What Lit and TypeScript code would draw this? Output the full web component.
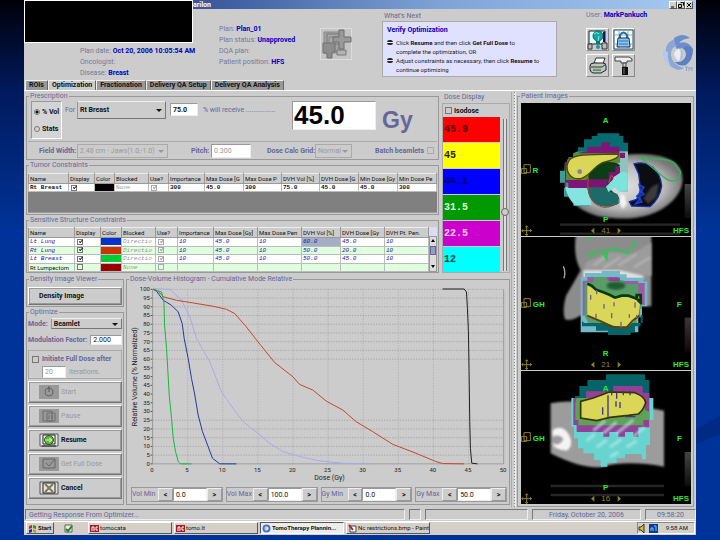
import { LitElement, html, svg, css, nothing } from "lit";
import { customElement } from "lit/decorators.js";

type Cell = string | boolean | { color: string };
interface Column { label: string; width: number }

const tumorColumns: Column[] = [
  { label: "Name", width: 40 }, { label: "Display", width: 26 }, { label: "Color", width: 20 },
  { label: "Blocked", width: 34 }, { label: "Use?", width: 20 }, { label: "Importance", width: 36 },
  { label: "Max Dose [G", width: 39 }, { label: "Max Dose P", width: 38 }, { label: "DVH Vol [%]", width: 38 },
  { label: "DVH Dose [G", width: 39 }, { label: "Min Dose [Gy", width: 39 }, { label: "Min Dose Pe", width: 39 },
];
const tumorRows: Cell[][] = [
  ["Rt Breast", true, { color: "#000" }, "None", true, "300", "45.0", "300", "75.0", "45.0", "45.0", "300"],
];
const organColumns: Column[] = [
  { label: "Name", width: 46 }, { label: "Display", width: 26 }, { label: "Color", width: 21 },
  { label: "Blocked", width: 34 }, { label: "Use?", width: 22 }, { label: "Importance", width: 36 },
  { label: "Max Dose [Gy]", width: 44 }, { label: "Max Dose Pen", width: 44 }, { label: "DVH Vol [%]", width: 39 },
  { label: "DVH Dose [Gy", width: 44 }, { label: "DVH Pt. Pen.", width: 44 },
];
const organRows: Cell[][] = [
  ["Lt Lung", true, { color: "#0033cc" }, "Directio", true, "10", "45.0", "10", "60.0", "45.0", "10"],
  ["Rt Lung", true, { color: "#cc3300" }, "Directio", true, "10", "45.0", "10", "50.0", "20.0", "10"],
  ["Lt Breast", true, { color: "#00cc33" }, "Directio", true, "10", "45.0", "10", "50.0", "45.0", "10"],
  ["Rt Lumpectom", false, { color: "#990000" }, "None", false, "", "", "", "", "", ""],
];
const doses = [
  { value: "45.9", bg: "#ff0000", fg: "#5a0000" },
  { value: "45", bg: "#ffff00", fg: "#222200" },
  { value: "44.1", bg: "#0000ff", fg: "#000066" },
  { value: "31.5", bg: "#009900", fg: "#ddffdd" },
  { value: "22.5", bg: "#cc00cc", fg: "#ffccff" },
  { value: "12", bg: "#00ffff", fg: "#004444" },
];
const curves = [
  { color: "#a9a9ee", points: "400,50 450,52 485,85 510,135 530,200 570,270 605,360 640,410 670,450 715,485 750,515 790,540 840,555 900,568 970,575 1050,577" },
  { color: "#c8452a", points: "400,52 412,56 432,75 470,85 520,93 580,103 620,112 645,125 680,165 715,210 765,272 820,315 840,338 880,355 920,388 970,415 1010,450 1060,480 1120,518 1190,545 1250,570 1270,576 1335,577" },
  { color: "#2038a8", points: "400,52 410,58 430,85 455,100 475,120 487,155 493,200 505,260 515,320 525,370 535,430 548,480 565,525 578,560 600,577 650,577" },
  { color: "#14b83c", points: "400,52 425,60 432,90 434,160 440,230 444,300 448,370 455,440 460,500 467,540 475,570 482,577 515,577" },
  { color: "#222222", points: "1270,51 1335,51 1342,60 1345,110 1348,180 1350,300 1352,450 1354,530 1358,575 1375,577" },
];

@customElement("app-root")
export class AppRoot extends LitElement {
  static styles = css`
    :host { display: block; font-family: Roboto, "Liberation Sans", sans-serif; font-size: 7px; line-height: 8px; color: #111;
      background: linear-gradient(#000008 0, #001a5c 90px, #003399 230px, #003399 100%); }
    *, *::before, *::after { box-sizing: border-box; }
    .slide { position: relative; padding: 0 24px 2px; min-height: 100vh; overflow: hidden; }
    .swoosh { position: absolute; right: 0; bottom: 96px; width: 24px; height: 28px; background: #002b85;
      clip-path: polygon(0 46%, 100% 0, 100% 66%, 0 100%); }
    .window { position: relative; background: #ccc; }
    .redacted { position: absolute; left: 0; top: 0; width: 169px; height: 43px; background: #000; border: 1px solid #fff; }
    button, input, select { font: inherit; color: inherit; margin: 0; padding: 0; border-radius: 0; min-width: 0; }
    input[type="text"] { border: 1px solid #999; border-right-color: #eee; border-bottom-color: #eee; background: #fff; padding: 0 2px; width: 100%; height: 100%; }
    input:disabled, button:disabled, select:disabled { opacity: 1; color: #999; }
    .check { appearance: none; display: block; flex: none; width: 7px; height: 7px; border: 1px solid #777; background: transparent; position: relative; }
    .check:checked::after { content: ""; position: absolute; left: 1px; top: 0; width: 4px; height: 2px; border-left: 1px solid #222; border-bottom: 1px solid #222; transform: rotate(-45deg); }
    .check:disabled { border-color: #aaa; }
    .check:disabled::after { border-color: #999; }
    .label { color: #666699; font-weight: bold; white-space: nowrap; }

    .titlebar { display: flex; justify-content: space-between; align-items: center; height: 9px; padding: 0 3px 0 169px;
      background: linear-gradient(90deg, #0a246a 0, #3a5a9c 28%, #7fa3d8 62%, #a6caf0 100%); color: #fff; font-weight: bold; }
    .winbuttons { display: flex; }
    .winbuttons button { display: block; width: 8px; height: 8px; background: #d4d0c8; border: 1px solid; border-color: #fff #555 #555 #fff; }
    .winbuttons svg { display: block; width: 6px; height: 6px; }

    .header { display: grid; grid-template-columns: 139px 96px 67px 204px 76px 1fr; height: 71px; padding-left: 56px; white-space: nowrap; color: #77779a; line-height: 10px; }
    .header b { color: #0000c0; }
    .facts { display: flex; flex-direction: column; gap: 1px; }
    .facts.first { padding-top: 36px; }
    .facts.second { padding-top: 15px; }
    .shape { padding: 19px 0 0 5px; }
    .shape svg { display: block; width: 32px; height: 32px; }
    .next { display: flex; flex-direction: column; padding-top: 2px; width: 175px; }
    .next h2 { margin: 0; font: inherit; padding-left: 2px; color: #666699; }
    .advice { background: #e0e0ff; border: 1px solid #aaa; color: #222; padding: 4px 0 0 4px; height: 56px; }
    .advice h3 { margin: 0 0 3px; font-size: 7px; line-height: 9px; color: #0000c0; }
    .advice ul { list-style: none; margin: 0; padding: 0 0 0 9px; font-size: 6px; line-height: 9px; }
    .advice li { position: relative; }
    .advice li::before { content: ""; position: absolute; left: -9px; top: 2px; width: 6px; height: 5px; border-radius: 3px; background: linear-gradient(#222 0 2px, #eee 2px 3px, #222 3px); }
    .advice b { color: #111; }
    .user { padding-top: 1px; }
    .tools { display: grid; grid-template-columns: 23px 23px; gap: 3px; padding-top: 8px; }
    .tools button { width: 23px; height: 23px; background: #ccc; border: 1px solid; border-color: #fff #888 #888 #fff; }
    .tools svg { display: block; width: 21px; height: 21px; }
    .logo svg { display: block; width: 32px; height: 38px; margin-top: 25px; }

    .tabs { display: flex; height: 11px; padding-left: 1px; border-bottom: 1px solid #fff; }
    .tabs button { border: 1px solid; border-color: #eee #666 transparent #eee; border-bottom: 0; background: #999; font-weight: bold; height: 10px; padding: 0 3px; line-height: 9px; white-space: nowrap; color: #111; }
    .tabs button.on { background: #ccc; }

    .main { display: grid; grid-template-columns: minmax(0, 1fr) 5px 177px; gap: 0 1px; padding: 1px 2px 1px; }
    .work { display: flex; flex-direction: column; gap: 2px; }
    .upper { display: grid; grid-template-columns: minmax(0, 1fr) 68px; gap: 3px; }
    .lower { display: grid; grid-template-columns: 98px minmax(0, 1fr); gap: 2px; }
    .stack { display: flex; flex-direction: column; gap: 1px; min-width: 0; }
    fieldset { margin: 0; min-width: 0; padding: 0 1px; border: 1px solid #999; }
    legend { margin-left: 1px; padding: 0 1px; color: #666699; line-height: 8px; height: 8px; white-space: nowrap; }
    .split { background: repeating-linear-gradient(#888 0 1px, #ddd 1px 3px) 2px 0 / 1px 100% no-repeat #ccc; border-left: 1px solid #aaa; border-right: 1px solid #eee; }

    .dose-rx { display: grid; grid-template-columns: 31px 15px 89px 34px 92px 84px 1fr; align-items: start; height: 41px; padding: 1px 3px; }
    .radios { border: 1px solid; border-color: #999 #fff #fff #999; height: 38px; display: flex; flex-direction: column; justify-content: space-around; padding: 1px 2px; font-weight: bold; background: #d4d4d4; }
    .radios label { display: flex; align-items: center; gap: 2px; white-space: nowrap; }
    .radios input { appearance: none; width: 6px; height: 6px; flex: none; border: 1px solid #777; border-radius: 50%; }
    .radios input:checked { background: radial-gradient(#111 0 1px, #ddd 2px); }
    .dose-rx .label { padding: 5px 0 0 3px; font-weight: normal; }
    .picker { position: relative; display: block; }
    .picker select { appearance: none; display: block; width: 100%; height: 100%; padding: 0 2px; background: #ccc; border: 1px solid; border-color: #eee #777 #777 #999; font-weight: bold; }
    .picker select:disabled { font-weight: normal; border-color: #aaa; }
    .picker::after { content: ""; position: absolute; right: 4px; top: 50%; margin-top: -1px; border: 3px solid transparent; border-top: 3px solid #111; border-bottom: 0; pointer-events: none; }
    .picker.off::after { border-top-color: #999; }
    .target { height: 18px; }
    .percent { width: 28px; height: 13px; margin: 2px 0 0 4px; }
    .percent input { font-weight: bold; }
    .total { height: 29px; }
    input[type="text"].big { font: bold 26px/26px "Liberation Sans", sans-serif; color: #000; padding: 0 1px; }
    .dose-rx .unit { font: bold 23px/28px "Liberation Sans", sans-serif; color: #666699; padding-left: 6px; }
    .geometry { display: grid; grid-template-columns: 38px 91px 23px 20px 56px 48px 37px 1fr 8px; align-items: center; height: 18px; padding: 1px 2px 1px 11px; border-top: 1px solid #aaa; }
    .geometry .picker { height: 14px; }
    .geometry .pitch { height: 14px; width: 40px; }
    .geometry .batch { justify-self: end; padding-right: 3px; }

    table { width: 100%; border-collapse: collapse; table-layout: fixed; }
    th { height: 10px; padding: 0 0 0 1px; text-align: left; font-size: 6px; font-weight: normal; background: #ccc; border: 1px solid #999; border-top-color: #eee; white-space: nowrap; overflow: hidden; line-height: 8px; }
    td { height: 8px; padding: 0 0 0 1px; border: 1px solid #bbb; border-top: 0; background: #fff; white-space: nowrap; overflow: hidden; font: bold 6px/7px "Liberation Mono", monospace; }
    td .check { width: 6px; height: 6px; margin-left: 1px; }
    .swatch { height: 7px; margin-left: -1px; }
    td.dim { color: #999; font-weight: normal; }
    .table-box { margin: 4px 0 1px; height: 40px; background: #808080; border-bottom: 1px solid #999; }
    .organ-box { margin-top: 3px; height: 45px; display: grid; grid-template-columns: minmax(0, 1fr) 8px; overflow: hidden; background: #dcdcf0; }
    .organ-box td { font-weight: normal; font-style: italic; color: #1818a8; }
    .organ-box td.dim { color: #999; }
    .organ-box tr:nth-child(even) td { background: #dfffdf; }
    .organ-box tr:nth-child(4) td:first-child { font: 6px/7px Roboto, sans-serif; color: #111; }
    .organ-box td.picked { background: #a4aec4; }
    .scroll { display: grid; grid-template-rows: 9px 1fr 9px; background: #ddd; border: 1px solid #999; margin-top: 9px; }
    .scroll svg { display: block; width: 6px; height: 8px; }
    .scroll i { display: block; height: 9px; background: #9999cc; border: 1px solid #666699; }

    .dose { display: flex; flex-direction: column; }
    .dose h2 { margin: 0; font: inherit; color: #666699; line-height: 11px; padding-left: 2px; }
    .dose-box { display: grid; grid-template-columns: 57px 1fr; grid-template-rows: 13px 1fr; border: 1px solid #aaa; flex: 1; }
    .iso { grid-column: 1 / 3; display: flex; align-items: center; gap: 2px; font-weight: bold; padding-left: 2px; }
    .bars { display: grid; grid-auto-rows: 25px; gap: 1px; }
    .bar { display: flex; align-items: center; padding-left: 1px; font: bold 10px/12px "Liberation Mono", monospace; }
    .slider { appearance: none; writing-mode: vertical-lr; direction: rtl; width: 8px; height: 152px; margin: 2px 0 0 1px; background: linear-gradient(90deg, #777 0 1px, #ddd 1px 3px, #777 3px 4px) 2px 0 / 4px 100% no-repeat; }
    .slider::-webkit-slider-thumb { appearance: none; width: 8px; height: 8px; border: 1px solid #666; border-radius: 50%; background: #ccc; }

    .density { padding: 4px 1px 1px; }
    .density button, .action { display: block; width: 100%; border: 1px solid; border-color: #fff #777 #777 #fff; outline: 1px solid #999; outline-offset: -2px; background: #ccc; font-weight: bold; text-align: left; }
    .density button { height: 18px; padding-left: 10px; }
    .optimize { flex: 1; }
    .row { display: flex; align-items: center; gap: 3px; }
    .mode { height: 13px; margin: 1px 0 4px; }
    .mode .picker { flex: 1; height: 11px; }
    .mod { height: 11px; margin-bottom: 5px; }
    .mod .field { width: 34px; height: 10px; margin-left: auto; }
    .initiate { height: 29px; border: 1px solid #aaa; padding: 2px 3px; margin-bottom: 2px; color: #999; }
    .initiate .row { height: 12px; }
    .initiate .second { padding-left: 10px; margin-top: 1px; }
    .initiate .field { width: 24px; height: 12px; }
    .actions { display: grid; gap: 2px; }
    .action { display: flex; align-items: center; gap: 2px; height: 22px; padding-left: 10px; }
    .action:disabled { font-weight: normal; }
    .action svg { display: block; width: 20px; height: 14px; }

    .dvh { display: flex; flex-direction: column; padding-top: 2px; }
    .plot { display: block; width: 100%; }
    .plot text { font: 18px Roboto, "Liberation Sans", sans-serif; fill: #222; }
    .plot text.axis { font-size: 21px; }
    .ranges { display: grid; grid-template-columns: repeat(4, minmax(0, 1fr)); gap: 3px; padding: 3px 1px 2px 3px; }
    .range { display: grid; grid-template-columns: 26px 1fr 34px 1fr; height: 15px; border: 1px solid #999; align-items: stretch; }
    .range .label { line-height: 13px; font-weight: normal; }
    .range button { background: #ccc; border: 1px solid; border-color: #eee #999 #999 #eee; font-weight: bold; }

    .patient { display: flex; flex-direction: column; }
    .scans { display: grid; gap: 1px; padding: 3px 1px 2px 2px; }
    .scans svg { display: block; width: 100%; background: #000; }
    .scans text { font: bold 24px "Liberation Sans", sans-serif; fill: #22ee33; text-anchor: middle; }
    .scans text.slice { font-weight: normal; fill: #8f8420; }

    .status { display: grid; grid-template-columns: 380px 12px 1fr 109px 51px; gap: 4px; height: 13px; padding: 1px 0 1px 1px; color: #666699; line-height: 10px; }
    .status > div { border: 1px solid; border-color: #777 #eee #eee #777; white-space: nowrap; overflow: hidden; text-align: center; }
    .status > div:first-child { text-align: left; padding-left: 3px; }
    .taskbar { display: flex; align-items: center; gap: 2px; height: 14px; background: #d4d0c8; border-top: 1px solid #fff; padding: 0 1px 0 2px; font-size: 6px; }
    .taskbar button { display: flex; align-items: center; gap: 1px; height: 12px; width: 84px; padding-left: 1px; background: #d4d0c8; border: 1px solid; border-color: #fff #555 #555 #fff; white-space: nowrap; overflow: hidden; }
    .taskbar button.start { width: 28px; font-weight: bold; }
    .taskbar button.quick { width: 24px; border-color: transparent; margin: 0 4px 0 2px; padding-left: 5px; }
    .taskbar button.on { background: #eeece8; border-color: #555 #fff #fff #555; font-weight: bold; }
    .taskbar svg { display: block; width: 9px; height: 9px; flex: none; }
    .tray { display: flex; align-items: center; gap: 2px; margin-left: auto; width: 58px; height: 12px; border: 1px solid; border-color: #888 #fff #fff #888; }
    .tray span { margin-left: auto; padding-right: 6px; white-space: nowrap; }
  `;

  private cell(value: Cell, column: number, row: number, name: string) {
    if (typeof value === "boolean")
      return html`<td><input class="check" type="checkbox" aria-label=${name} .checked=${value} ?disabled=${column === 4}></td>`;
    if (typeof value === "object")
      return html`<td><div class="swatch" style="background:${value.color}"></div></td>`;
    const kind = column === 3 ? "dim" : column === 8 && row === 0 && name === "Lt Lung" ? "picked" : "";
    return html`<td class=${kind}>${value}</td>`;
  }

  private table(columns: Column[], rows: Cell[][]) {
    return html`<table>
      <colgroup>${columns.map((c) => html`<col style="width:${c.width}px">`)}</colgroup>
      <thead><tr>${columns.map((c) => html`<th>${c.label}</th>`)}</tr></thead>
      <tbody>${rows.map((r, i) => html`<tr>${r.map((v, j) => this.cell(v, j, i, String(r[0])))}</tr>`)}</tbody>
    </table>`;
  }

  private header() {
    return html`<header class="header">
      <div class="facts first">
        <div></div>
        <div>Plan date: <b>Oct 20, 2006 10:05:54 AM</b></div>
        <div>Oncologist:</div>
        <div>Disease: <b>Breast</b></div>
      </div>
      <div class="facts second">
        <div>Plan: <b>Plan_01</b></div>
        <div>Plan status: <b>Unapproved</b></div>
        <div>DQA plan:</div>
        <div>Patient position: <b>HFS</b></div>
      </div>
      <div class="shape"><svg viewBox="0 0 32 32" aria-hidden="true">
        <rect x=".5" y=".5" width="31" height="31" fill="#c4c4c4" stroke="#ddd"/>
        <path d="M4 4h17v21H4z" fill="#a2a2a2" stroke="#888"/><path d="M7 6h15v10H7z" fill="#aaa" stroke="#777"/><path d="M9 9h14v14H9z" fill="none" stroke="#808080"/>
        <path d="M19 2h5v7h7v5h-7v7h-5v-7h-6V9h6z" fill="#999" stroke="#6c6c6c"/>
        <path d="M3 15h12v9h-3v6H7v-5H3z" fill="#8c8c8c" stroke="#707070"/><path d="M17 22h9v5h-9z" fill="#b2b2b2" stroke="#777"/>
      </svg></div>
      <section class="next">
        <h2>What's Next</h2>
        <div class="advice">
          <h3>Verify Optimization</h3>
          <ul>
            <li>Click <b>Resume</b> and then click <b>Get Full Dose</b> to<br>complete the optimization, OR</li>
            <li>Adjust constraints as necessary, then click <b>Resume</b> to<br>continue optimizing</li>
          </ul>
        </div>
      </section>
      <div class="user">User: <b>MarkPankuch</b>
        <div class="tools">
          <button aria-label="Help"><svg viewBox="0 0 21 21">
            <path d="M2 2h16v13H2z" fill="#dff" stroke="#222"/><path d="M1 15h4v5H1zM15 14h5v6h-5z" fill="#bbb" stroke="#333"/>
            <circle cx="11" cy="7" r="5" fill="#1aa0a8" stroke="#075"/><path d="M7 5q3-3 5 0M12 7l-1 5" stroke="#7ee" fill="none"/>
            <path d="M9 12h4v3H9z" fill="#176"/><circle cx="11" cy="18" r="2" fill="#19a"/><path d="M17 3v10" stroke="#116" stroke-width="2"/>
          </svg></button>
          <button aria-label="Lock"><svg viewBox="0 0 21 21">
            <path d="M1 1h19v19H1z" fill="#fff" stroke="#1a4a6a"/><path d="M6 1v19M15 1v19M1 6h19M1 15h19" stroke="#8ac"/>
            <path d="M7 9V6q3.500-5 7 0v3" fill="none" stroke="#2a6a9a" stroke-width="2"/>
            <path d="M5 9h11l1 9H4z" fill="#8cc8ee" stroke="#226"/><path d="M6 12h9M6 15h9" stroke="#27a"/>
          </svg></button>
          <button aria-label="Print"><svg viewBox="0 0 21 21">
            <path d="M7 8l2-5h9l-2 6z" fill="#fff" stroke="#333"/><path d="M3 11q0-3 4-3h9q3 0 3 3v4l-5 3H6q-3-1-3-4z" fill="#bcc8bc" stroke="#222"/>
            <path d="M4 12h11l4-3M6 15h8" stroke="#333" fill="none"/><path d="M7 14h7" stroke="#6c9"/>
          </svg></button>
          <button aria-label="Settings"><svg viewBox="0 0 21 21">
            <path d="M2 2h14l3 2v2h-5v2H8V6H2z" fill="#eee" stroke="#444"/><path d="M10 8h3v4h-3z" fill="#ccc" stroke="#444"/>
            <path d="M9 12h6v8H9z" fill="#111"/><path d="M11 13v6" stroke="#777"/>
          </svg></button>
        </div>
      </div>
      <div class="logo"><svg viewBox="0 0 32 38" aria-hidden="true">
        <path d="M12 4Q21 -2 28 4Q20 5 17 9Q26 6 31 15Q22 11 16 16Q12 12 12 4Z" fill="#6c8ecc"/>
        <path d="M12 5Q3 10 4 16Q2 18 1 16Q1 31 16 36Q20 36 22 34Q9 30 9 20Q9 13 15 12Q11 9 12 5Z" fill="#8ca6d8"/>
        <path d="M1 16Q0 28 9 33Q5 26 6 18Z" fill="#b8c8e8"/>
        <path d="M31 15Q31 26 24 31Q17 33 13 28Q22 29 24 21Q24 16 20 14Q26 10 31 15Z" fill="#5c80c4"/>
        <path d="M17 14Q20 19 17 27Q13 25 12 20Q13 16 17 14Z" fill="#e6edfa"/><path d="M19 15Q23 21 18 27Q20 20 19 15Z" fill="#a8bce4"/>
        <path d="M23 33h3M24.500 33v4M27 37v-4l1.500 2 1.500-2v4" stroke="#8aa4d4" fill="none"/>
      </svg></div>
    </header>`;
  }

  private prescription() {
    return html`<fieldset>
      <legend>Prescription</legend>
      <div class="dose-rx">
        <div class="radios">
          <label><input type="radio" name="goal" checked>% Vol</label>
          <label><input type="radio" name="goal">Stats</label>
        </div>
        <label class="label" for="target">For</label>
        <span class="picker target"><select id="target"><option>Rt Breast</option></select></span>
        <div class="percent"><input type="text" id="pct" aria-label="Percent volume" value="75.0"></div>
        <label class="label" for="pct">% will receive ................</label>
        <div class="total"><input class="big" type="text" id="total" aria-label="Prescribed dose" value="45.0"></div>
        <label class="label unit" for="total">Gy</label>
      </div>
      <div class="geometry">
        <label class="label" for="fw">Field Width:</label>
        <span class="picker off"><select id="fw" disabled><option>2.48 cm - Jaws(1.0,-1.0)</option></select></span>
        <span></span>
        <label class="label" for="pitch">Pitch:</label>
        <div class="pitch"><input type="text" id="pitch" disabled value="0.300"></div>
        <label class="label" for="grid">Dose Calc Grid:</label>
        <span class="picker off"><select id="grid" disabled><option>Normal</option></select></span>
        <label class="label batch" for="batch">Batch beamlets</label>
        <input class="check" id="batch" type="checkbox" disabled>
      </div>
    </fieldset>`;
  }

  private doseDisplay() {
    return html`<section class="dose">
      <h2>Dose Display</h2>
      <div class="dose-box">
        <label class="iso"><input class="check" type="checkbox">Isodose</label>
        <div class="bars">${doses.map((d) => html`<div class="bar" style="background:${d.bg};color:${d.fg}">${d.value}</div>`)}</div>
        <input class="slider" type="range" aria-label="Dose opacity" min="0" max="100" value="38">
      </div>
    </section>`;
  }

  private controls() {
    const screen = (fill: string) => svg`<path d="M1 1h18v12H1z" fill=${fill} stroke="#555"/>`;
    return html`<div class="stack">
      <fieldset class="density"><legend>Density Image Viewer</legend><button>Density Image</button></fieldset>
      <fieldset class="optimize">
        <legend>Optimize</legend>
        <div class="row mode"><label class="label" for="mode">Mode:</label>
          <span class="picker"><select id="mode"><option>Beamlet</option></select></span></div>
        <div class="row mod"><label class="label" for="factor">Modulation Factor:</label>
          <div class="field"><input type="text" id="factor" value="2.000"></div></div>
        <div class="initiate">
          <div class="row"><input class="check" type="checkbox" id="init"><label class="label" for="init">Initiate Full Dose after</label></div>
          <div class="row second"><div class="field"><input type="text" id="iter" disabled value="20"></div><label for="iter">iterations.</label></div>
        </div>
        <div class="actions">
          <button class="action" disabled><svg viewBox="0 0 20 14"><rect width="20" height="14" fill="#999"/><circle cx="10" cy="7" r="4" fill="none" stroke="#666"/><path d="M10 1v6" stroke="#555"/></svg>Start</button>
          <button class="action" disabled><svg viewBox="0 0 20 14"><rect width="20" height="14" fill="#999"/><path d="M4 2h9v10H4zM8 4h8v8H8zM10 6v4M13 6v4" fill="none" stroke="#6c6c6c"/></svg>Pause</button>
          <button class="action"><svg viewBox="0 0 20 14">${screen("#e8e8e8")}<path d="M4 2h12v9H4zM3 13h14" fill="#fff" stroke="#222"/><circle cx="10" cy="7" r="4.500" fill="#5cb83c" stroke="#285c14"/><path d="M6 7h7M10 5l3 2-3 2" stroke="#d4f4c4" fill="none"/></svg>Resume</button>
          <button class="action" disabled><svg viewBox="0 0 20 14"><rect width="20" height="14" fill="#999"/><path d="M4 2h12v9H4zM7 6l3 3 6-7" fill="none" stroke="#666"/></svg>Get Full Dose</button>
          <button class="action"><svg viewBox="0 0 20 14">${screen("#ddd")}<path d="M4 2h12v10H4z" fill="#eee8bc" stroke="#222"/><path d="M6 3l8 8M14 3l-8 8" stroke="#777" stroke-width="2"/></svg>Cancel</button>
        </div>
      </fieldset>
    </div>`;
  }

  private histogram() {
    const steps = Array.from({ length: 21 }, (_, i) => i);
    const y = (i: number) => 52 + i * 26.25;
    const x = (i: number) => 398 + i * 105.6;
    return html`<fieldset class="dvh">
      <legend>Dose-Volume Histogram - Cumulative Mode Relative</legend>
      <svg class="plot" viewBox="324 39 1143 600" role="img" aria-label="Dose volume histogram">
        ${steps.map((i) => svg`
          ${i <= 8 || (i >= 15 && i < 20) ? svg`<path d="M398 ${y(i)}H1454" stroke="#999" stroke-width="2" stroke-dasharray="4 4"/>` : nothing}
          <path d="M392 ${y(i)}h6" stroke="#555" stroke-width="3"/>
          <text x="390" y=${y(i) + 6} text-anchor="end">${100 - i * 5}</text>`)}
        ${steps.slice(0, 11).map((i) => svg`
          <path d="M${x(i)} 52V577" stroke="#a4a4a4" stroke-width="2" stroke-dasharray="4 4"/>
          <text x=${x(i) - 2} y="601" text-anchor="middle">${i * 5}</text>`)}
        <path d="M398 52V577H1454V52" fill="none" stroke="#888" stroke-width="2"/>
        ${curves.map((c) => svg`<polyline points=${c.points} fill="none" stroke=${c.color} stroke-width="3"/>`)}
        <text class="axis" x="930" y="627" text-anchor="middle">Dose (Gy)</text>
        <text class="axis" transform="translate(352 315) rotate(-90)" text-anchor="middle">Relative Volume (% Normalized)</text>
      </svg>
      <div class="ranges">
        ${[["Vol Min", "0.0"], ["Vol Max", "100.0"], ["Gy Min", "0.0"], ["Gy Max", "50.0"]].map(([name, value], i) => html`
          <div class="range"><label class="label" for="r${i}">${name}</label>
            <button aria-label="Decrease ${name}">&lt;</button>
            <input type="text" id="r${i}" value=${value}>
            <button aria-label="Increase ${name}">&gt;</button></div>`)}
      </div>
    </fieldset>`;
  }

  /* Orientation letters, slice stepper and pan glyph shared by the three views; y values follow each view's own box. */
  private overlay(top: string, topY: number, left: string, midY: number, bottom: string, bottomY: number, slice: string, endY: number, right = "") {
    return svg`
      ${top ? svg`<text x="287" y=${topY}>${top}</text>` : nothing}
      <text x=${left.length > 1 ? 86 : 76} y=${midY}>${left}</text>
      ${right ? svg`<text x="508" y=${midY}>${right}</text>` : nothing}
      <text x="287" y=${bottomY}>${bottom}</text>
      <text class="slice" x="287" y=${endY}>${slice}</text>
      <text x="513" y=${endY}>HFS</text>
      <path d="M243 ${endY - 8}l10-9v18zM333 ${endY - 8}l-10-9v18z" fill="#8f8420"/>
      <path d="M42 ${midY - 24}h19v24h-19zM34 ${midY - 12}h16v14h-16z" fill="none" stroke="#8f8420" stroke-width="3"/>
      <path d="M36 ${endY - 8}h28M50 ${endY - 22}v28M40 ${endY - 12}l-5 4 5 4M60 ${endY - 12}l5 4-5 4M46 ${endY - 18}l4-5 4 5M46 ${endY + 2}l4 5 4-5" fill="none" stroke="#8f8420" stroke-width="3"/>`;
  }

  private scans() {
    return html`<fieldset class="patient">
      <legend>Patient Images</legend>
      <div class="scans">
        <svg viewBox="33 39 510 399" role="img" aria-label="Axial view">
          <defs>
            <linearGradient id="ramp" x1="0" y1="0" x2="0" y2="1"><stop offset="0" stop-color="#444"/><stop offset="1" stop-color="#0c0c0c"/></linearGradient>
            <radialGradient id="tissue"><stop offset="0" stop-color="#e0e0e0"/><stop offset=".7" stop-color="#b8b8b8"/><stop offset="1" stop-color="#777"/></radialGradient>
            <filter id="soft"><feGaussianBlur stdDeviation="3"/></filter>
          </defs>
          <path d="M150 404H510M150 431H510" stroke="#282828" stroke-width="7"/>
          <path d="M165 250C160 205 240 192 335 196C420 184 490 200 508 232C526 262 520 300 488 332C440 380 370 390 305 384C230 380 175 340 165 290Z" fill="url(#tissue)" filter="url(#soft)"/>
          <path d="M222 163V148H245V138H262V130H328V138H340V158H354V184H204V172H222Z" fill="#066c70"/>
          <path d="M320 184H354V305H330V240H320Z" fill="#8cc4c0"/>
          <path d="M204 184H322V240H240V348H190V320H162V294H170V278H150V242H164V218H175V202H190V190Z" fill="#3c9c98"/>
          <path d="M165 290Q172 322 195 346H245L232 292H172Z" fill="#86e4e0"/>
          <path d="M232 184V170H275V157H300V170H328V188H345V204H330V215H322V240H240V294H175V278H165V215H175V205H205V188Z" fill="#7e1678"/>
          <path d="M172 208H190V190H330V218H322V235H300V262H235V270H168V240Z" fill="#63843c"/>
          <path d="M262 220Q310 210 330 226Q318 248 304 264Q290 296 312 308Q330 315 330 338Q290 360 255 340Q230 322 232 270Q240 235 262 220Z" fill="#0b3e16"/>
          <path d="M232 278H292L290 300L322 312L330 338Q290 360 255 340Q236 325 232 290Z" fill="#1e6a68"/>
          <path d="M230 268H296V246H316V228L330 230V250L310 262V276H290V292H234Z" fill="#7c1470"/>
          <path d="M312 265Q336 236 353 250V300L325 305L315 292L295 306L288 290L300 278Z" fill="#7ce4dc"/>
          <path d="M236 262C228 300 238 345 282 352C300 352 310 348 316 340" fill="none" stroke="#a0502c" stroke-width="3"/>
          <path d="M296 278L304 256L310 262" fill="none" stroke="#c34c50" stroke-width="3"/>
          <path d="M332 310L345 318L350 345L338 357L328 338Z" fill="#f4f4f4" filter="url(#soft)"/>
          <path d="M372 222Q400 212 428 232Q452 252 455 288Q450 325 420 350L365 348L358 335L380 328L392 300L386 252Z" fill="#0b0d12" stroke="#1630b0" stroke-width="4"/>
          <path d="M425 290L447 280L440 320L415 342L400 325Z" fill="#3a3a3a" filter="url(#soft)"/>
          <path d="M387 284L402 292L394 304L402 312L388 320L396 336L376 342L388 328L380 318L392 308Z" fill="#1a2c78" stroke="#1c40dc" stroke-width="4"/>
          <path d="M175 216C185 190 240 195 325 192C330 205 300 212 278 218C250 230 240 258 212 266C175 270 165 235 175 216Z" fill="#d9d658" stroke="#464c00" stroke-width="4"/>
          <circle cx="209" cy="245" r="7" fill="#8280a0"/>
          <path d="M392 202C430 212 480 200 498 225C508 240 515 246 510 252C508 278 480 278 462 262C435 240 405 215 392 202Z" fill="none" stroke="#32b850" stroke-width="4"/>
          <rect x="524" y="282" width="19" height="102" fill="url(#ramp)"/>
          ${this.overlay("A", 98, "R", 248, "P", 396, "41", 430)}
        </svg>
        <svg viewBox="33 4 510 398" role="img" aria-label="Coronal view">
          <defs>
            <linearGradient id="ramp2" x1="0" y1="0" x2="0" y2="1"><stop offset="0" stop-color="#3c3638"/><stop offset="1" stop-color="#100808"/></linearGradient>
            <filter id="soft2"><feGaussianBlur stdDeviation="3"/></filter>
          </defs>
          <path d="M198 -4H424V212H390V240H210Q190 255 166 252Q155 230 168 180Q192 140 212 104Q188 60 198 -4Z" fill="#8c8c8c" filter="url(#soft2)"/>
          <path d="M228 80L300 50L370 54L424 20V120H218Z" fill="#9c9c9c" filter="url(#soft2)"/>
          <path d="M250 90L290 60M280 98L330 66M325 90L380 55M372 95L420 65" stroke="#b0b0b0" stroke-width="8" filter="url(#soft2)"/>
          <path d="M220 104H330L400 120V130H220Z" fill="#e0e0e0" filter="url(#soft2)"/>
          <path d="M212 260V125H225V112H275V106H330V116H350V126H400V137H412V212H396V245H385V290H212Z" fill="#73bac8"/>
          <path d="M218 250V135H232V124H325V136H385V142H404V208H390V240H218Z" fill="#9a5ca4"/>
          <path d="M222 262H398V238H392V272H375V290H362V298H294V285H258V272H216V255Z" fill="#086468"/>
          <path d="M224 240V140H250V124H290V134H340V145H385V175H395V220H380V262H235Z" fill="#5a9c68"/>
          <path d="M296 126h34v10h-34z" fill="#9c3c98"/>
          <ellipse cx="318" cy="150" rx="28" ry="12" fill="#205c30" filter="url(#soft2)"/>
          <path d="M232 150L285 172L310 186L345 178L392 188L385 245L350 276L310 270L232 240Z" fill="#d9d658"/>
          <path d="M232 144L245 150L258 162L280 170L300 178L315 186L335 180L355 180L372 186L392 196V178H380V190L395 204" fill="none" stroke="#063c0c" stroke-width="8"/>
          <path d="M232 240L275 258L310 275H350L368 255L388 240" fill="none" stroke="#5c4208" stroke-width="6"/>
          <path d="M242 178v14M258 234v16M282 205v14M305 232v16M312 200v12M333 258v18M358 236v10M375 200v16M260 164v12M380 238v10" stroke="#6c60a0" stroke-width="4"/>
          <path d="M232 54L243 64L252 50L280 46L310 39L330 44L350 54L372 30V12M278 52L290 70L292 50L282 62M232 12L246 6" fill="none" stroke="#22cc4c" stroke-width="5"/>
          <path d="M160 92Q168 110 162 128" fill="none" stroke="#aaa" stroke-width="4"/>
          <rect x="524" y="246" width="19" height="102" fill="url(#ramp2)"/>
          ${this.overlay("", 0, "GH", 213, "R", 362, "21", 395, "F")}
        </svg>
        <svg viewBox="33 3 510 399" role="img" aria-label="Sagittal view">
          <defs>
            <linearGradient id="ramp3" x1="0" y1="0" x2="0" y2="1"><stop offset="0" stop-color="#444"/><stop offset="1" stop-color="#0c0c0c"/></linearGradient>
            <filter id="soft3"><feGaussianBlur stdDeviation="3"/></filter>
          </defs>
          <path d="M122 100Q160 92 210 96L410 130L425 115L462 122V290Q350 270 280 290Q220 300 122 250Z" fill="#9c9c9c" filter="url(#soft3)"/>
          <path d="M128 180Q160 160 180 200Q190 230 170 242Q130 240 128 220Q150 230 160 208Q150 190 128 200Z" fill="#f4f4f4" filter="url(#soft3)"/>
          <path d="M122 348H462M122 375H462" stroke="#262626" stroke-width="7"/>
          <path d="M184 84H430V150H420V225H408V268H395V252H345V265H320V278H292V290H272V270H252V250H220V235H204V205H192V170H184Z" fill="#68d4d0"/>
          <path d="M208 78V48H232V30H288V13H405V30H418V84H195V78Z" fill="#066468"/>
          <path d="M190 84H228V64H310V48H398V68H418V172H385V200H370V186H345V200H325V186H298V200H280V186H200V165H190Z" fill="#924098"/>
          <path d="M200 84H405V120L418 125V150H400V166H205V150H196V100Z" fill="#60a058"/>
          <path d="M212 94L250 84L298 66L375 68Q405 80 407 98Q400 120 385 132L355 136L300 142L260 152L212 144Z" fill="#d9d658" stroke="#383400" stroke-width="5"/>
          <path d="M278 112v22M294 76v62M305 60v16M320 68v18M318 94v16M330 96v18M340 62v14M360 62v14M346 140h30M294 130v16" stroke="#40348c" stroke-width="4"/>
          <path d="M250 182l36-30M280 190l40-34M320 190l50-40M230 212l25-20M260 232l30-22M300 232l34-24M350 232l30-20M370 200l34-28M300 262l24-16" stroke="#b8ece4" stroke-width="9" opacity=".65" filter="url(#soft3)"/>
          <rect x="524" y="246" width="19" height="102" fill="url(#ramp3)"/>
          ${this.overlay("A", 63, "GH", 212, "P", 361, "16", 394, "F")}
        </svg>
      </div>
    </fieldset>`;
  }

  private taskbar() {
    const red = svg`<path d="M0 1h9v7H0z" fill="#a01c28"/><path d="M2 3v4M2 3h2v4M8 3H6v3h2" stroke="#fff" fill="none"/>`;
    return html`<nav class="taskbar">
      <button class="start"><svg viewBox="0 0 9 9"><path d="M1 2l3-1v3l-3 1z" fill="#c22"/><path d="M5 1l3 1v3L5 4z" fill="#292"/><path d="M1 6l3-1v3l-3 1z" fill="#22c"/><path d="M5 5l3 1v3L5 8z" fill="#c92"/></svg>Start</button>
      <button class="quick" aria-label="Quick launch"><svg viewBox="0 0 9 9"><path d="M1 1h7v7H1z" fill="#e8f4d8" stroke="#565"/><path d="M2 5l2 2 4-5" stroke="#2a7a3a" stroke-width="2" fill="none"/></svg></button>
      <button><svg viewBox="0 0 9 9">${red}</svg>tomocata</button>
      <button><svg viewBox="0 0 9 9">${red}</svg>tomo.lt</button>
      <button class="on"><svg viewBox="0 0 9 9"><circle cx="4.500" cy="4.500" r="3" fill="none" stroke="#4a72c0" stroke-width="2"/><path d="M4 2v5" stroke="#9bd"/></svg>TomoTherapy Plannin...</button>
      <button><svg viewBox="0 0 9 9"><path d="M2 2h6v6H2z" fill="#fff" stroke="#444"/><path d="M1 1l4 5" stroke="#a22" stroke-width="2"/></svg>Nc restrictions.bmp - Paint</button>
      <div class="tray">
        <svg viewBox="0 0 9 9"><path d="M1 3h2l3-3v9L3 6H1z" fill="#d8b82c" stroke="#333"/></svg>
        <svg viewBox="0 0 9 9"><path d="M0 0h9v9H0z" fill="#0a3c9c"/><path d="M2 7V4h2v3M5 2h2v5" stroke="#7cf" fill="none"/></svg>
        <span>9:58 AM</span>
      </div>
    </nav>`;
  }

  render() {
    return html`<div class="slide">
      <div class="swoosh"></div>
      <div class="window">
        <div class="titlebar"><span>arilon</span>
          <div class="winbuttons">
            <button aria-label="Minimize"><svg viewBox="0 0 6 6"><path d="M1 5h3" stroke="#000"/></svg></button>
            <button aria-label="Restore"><svg viewBox="0 0 6 6"><path d="M2.500.5h3v3M.5 2.500h3v3h-3z" fill="none" stroke="#000"/></svg></button>
            <button aria-label="Close"><svg viewBox="0 0 6 6"><path d="M1 1l4 4M5 1l-4 4" stroke="#000"/></svg></button>
          </div>
        </div>
        ${this.header()}
        <nav class="tabs">
          <button>ROIs</button><button class="on">Optimization</button><button>Fractionation</button><button>Delivery QA Setup</button><button>Delivery QA Analysis</button>
        </nav>
        <main class="main">
          <div class="work">
            <div class="upper">
              <div class="stack">
                ${this.prescription()}
                <fieldset><legend>Tumor Constraints</legend><div class="table-box">${this.table(tumorColumns, tumorRows)}</div></fieldset>
                <fieldset><legend>Sensitive Structure Constraints</legend>
                  <div class="organ-box">${this.table(organColumns, organRows)}
                    <div class="scroll"><svg viewBox="0 0 6 8"><path d="M1 5l2-3 2 3z"/></svg><i></i><svg viewBox="0 0 6 8"><path d="M1 3l2 3 2-3z"/></svg></div>
                  </div></fieldset>
              </div>
              ${this.doseDisplay()}
            </div>
            <div class="lower">${this.controls()}${this.histogram()}</div>
          </div>
          <div class="split"></div>
          ${this.scans()}
        </main>
        <footer class="status"><div>Getting Response From Optimizer...</div><div></div><div></div><div>Friday, October 20, 2006</div><div>09:58:20</div></footer>
        ${this.taskbar()}
        <div class="redacted"></div>
      </div>
    </div>`;
  }
}
